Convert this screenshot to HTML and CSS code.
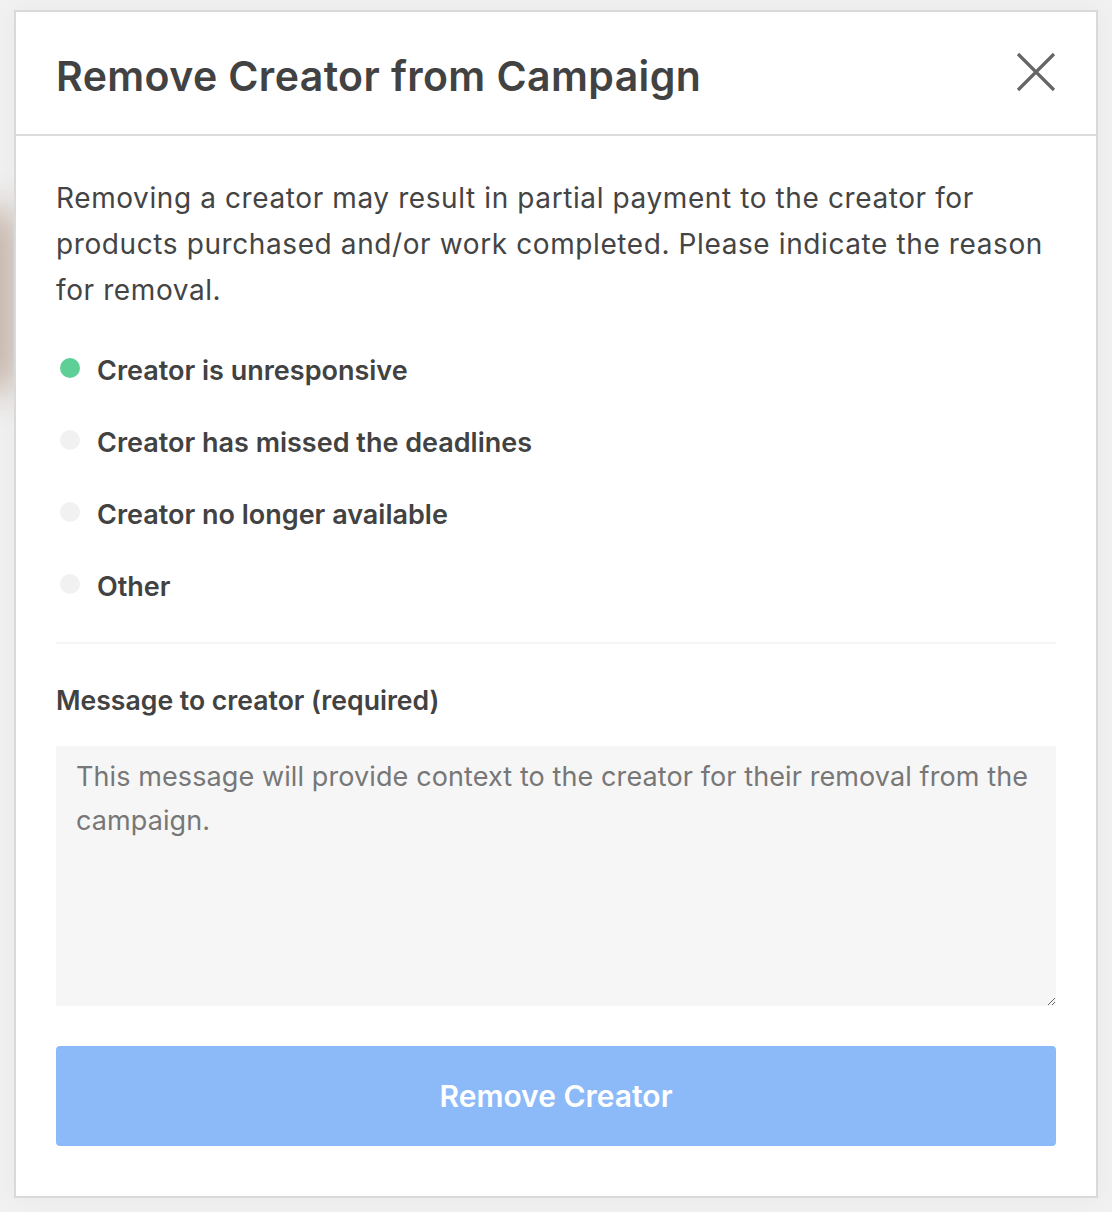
FILE: index.html
```html
<!DOCTYPE html>
<html lang="en">
<head>
<meta charset="utf-8">
<title>Remove Creator from Campaign</title>
<link rel="stylesheet" href="styles.css">
</head>
<body>
<div class="backdrop"></div>
<div class="modal">
  <div class="modal-header">
    <h1 class="modal-title">Remove Creator from Campaign</h1>
    <button class="close-btn" aria-label="Close">
      <svg width="40" height="40" viewBox="0 0 40 40"><path d="M2 2 L38 38 M38 2 L2 38" stroke="#666" stroke-width="3.2" stroke-linecap="butt" fill="none"/></svg>
    </button>
  </div>
  <div class="modal-body">
    <p class="intro">Removing a creator may result in partial payment to the creator for products purchased and/or work completed. Please indicate the reason for removal.</p>
    <ul class="reasons">
      <li class="reason"><span class="dot dot-on"></span><span>Creator is unresponsive</span></li>
      <li class="reason"><span class="dot"></span><span>Creator has missed the deadlines</span></li>
      <li class="reason"><span class="dot"></span><span>Creator no longer available</span></li>
      <li class="reason"><span class="dot"></span><span>Other</span></li>
    </ul>
    <div class="divider"></div>
    <label class="field-label" for="msg">Message to creator (required)</label>
    <textarea id="msg" class="message" placeholder="This message will provide context to the creator for their removal from the campaign."></textarea>
    <button class="submit-btn">Remove Creator</button>
  </div>
</div>
</body>
</html>
```
FILE: styles.css
```css
html, body {
  margin: 0;
  padding: 0;
}
body {
  background: #f1f1f1;
  height: 1212px;
  overflow: hidden;
  font-family: Inter, "Liberation Sans", sans-serif;
  color: #444;
  position: relative;
}
.backdrop {
  position: absolute;
  left: -40px;
  top: 210px;
  width: 56px;
  height: 180px;
  background: #c4b2a6;
  filter: blur(18px);
}
.modal {
  position: relative;
  margin: 10px 0 0 14px;
  width: 1080px;
  height: 1184px;
  background: #fff;
  border: 2px solid #d9d9d9;
  box-shadow: 0 0 30px rgba(0,0,0,0.04);
  display: flex;
  flex-direction: column;
}
.modal-header {
  height: 122px;
  border-bottom: 2px solid #dcdcdc;
  display: flex;
  align-items: center;
  justify-content: space-between;
  padding: 0 40px;
}
.modal-title {
  margin: 6px 0 0 0;
  font-size: 41px;
  font-weight: 600;
  color: #424242;
  letter-spacing: 0.4px;
}
.close-btn {
  background: none;
  border: 0;
  padding: 0;
  width: 40px;
  height: 40px;
  margin-top: -2px;
  cursor: pointer;
}
.close-btn svg { display: block; }
.modal-body {
  padding: 39px 40px 0 40px;
  display: flex;
  flex-direction: column;
}
.intro {
  margin: 0;
  font-size: 28px;
  line-height: 46px;
  letter-spacing: 0.6px;
  color: #444;
}
.reasons {
  list-style: none;
  margin: 21px 0 0 0;
  padding: 0;
}
.reason {
  display: flex;
  align-items: center;
  height: 72px;
  font-size: 27px;
  font-weight: 600;
  color: #424242;
}
.dot {
  width: 20px;
  height: 20px;
  border-radius: 50%;
  background: #f1f1f1;
  margin: -4px 17px 0 4px;
  flex: none;
}
.dot-on { background: #5fcf98; }
.divider {
  margin-top: 20px;
  height: 2px;
  background: #f4f4f4;
}
.field-label {
  margin-top: 36px;
  height: 40px;
  line-height: 40px;
  font-size: 26.6px;
  font-weight: 600;
  color: #424242;
}
.message {
  margin-top: 26px;
  box-sizing: border-box;
  width: 1000px;
  height: 260px;
  background-color: #f6f6f6;
  border: 0;
  padding: 9px 20px;
  font-family: inherit;
  font-size: 27px;
  letter-spacing: 0.1px;
  line-height: 44px;
  color: #444;
  resize: vertical;
  outline: none;
}
.message::placeholder { color: #777; }
.submit-btn {
  margin-top: 40px;
  height: 100px;
  width: 1000px;
  border: 0;
  border-radius: 4px;
  background: #8cb9f7;
  color: #fff;
  font-family: inherit;
  font-size: 30px;
  font-weight: 600;
  cursor: pointer;
}
```
